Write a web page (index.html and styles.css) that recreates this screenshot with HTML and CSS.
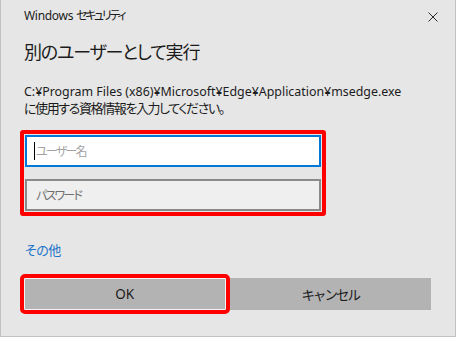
FILE: index.html
```html
<!DOCTYPE html>
<html lang="ja">
<head>
<meta charset="UTF-8" />
<meta name="viewport" content="width=device-width, initial-scale=1" />
<title>Windows セキュリティ</title>
<link rel="stylesheet" href="styles.css">
</head>
<body>

<div class="dialog">
  <div class="titlebar">
    <span class="app-name">Windows <span class="ja">セキュリティ</span></span>
    <svg class="close" width="10" height="10" viewBox="0 0 10 10" aria-label="閉じる">
      <path d="M0.5 0.5 L9.5 9.5 M9.5 0.5 L0.5 9.5" stroke="#2b2b2b" stroke-width="1" fill="none" />
    </svg>
  </div>

  <h1 class="heading">別のユーザーとして実行</h1>

  <p class="message">C:¥Program Files (x86)¥Microsoft¥Edge¥Application¥msedge.exe<br><span class="ja">に使用する資格情報を入力してください。</span></p>

  <!-- red box is the screenshot annotation -->
  <div class="mark">
    <div class="field focused"><span class="caret"></span><span class="hint">ユーザー名</span></div>
    <div class="field"><span class="hint dark">パスワード</span></div>
  </div>

  <a class="more" href="#">その他</a>

  <div class="buttons">
    <button class="btn ok">OK</button>
    <button class="btn">キャンセル</button>
  </div>
</div>

</body>
</html>
```

FILE: styles.css
```css
body {
  margin: 0;
  font-family: "Noto Sans", "Noto Sans CJK JP", sans-serif;
  font-feature-settings: "palt";
  color: #1b1b1b;
}
.dialog {
  width: 456px;
  height: 337px;
  box-sizing: border-box;
  background: #e6e6e6;
  border: 1px solid #c2c2c2;
  border-top: none;
  padding: 0 24px 0 23px;
  display: flex;
  flex-direction: column;
}
.titlebar {
  display: flex;
  justify-content: space-between;
  align-items: flex-start;
  padding-top: 8px;
  height: 24px;
  margin-right: -7px;
}
.app-name {
  font-size: 12px;
  line-height: 16px;
  letter-spacing: -0.3px;
}
.app-name .ja {
  letter-spacing: -2.3px;
}
.close {
  margin-top: 4px;
}
.heading {
  margin: 5px 0 0;
  font-family: "Noto Sans CJK JP", sans-serif;
  font-weight: normal;
  font-size: 18px;
  letter-spacing: -1.2px;
  line-height: 28px;
}
.message {
  margin: 18px 0 0;
  font-size: 12.4px;
  line-height: 17px;
}
.message .ja {
  font-size: 13px;
  letter-spacing: -1.4px;
}
.mark {
  align-self: flex-start;
  margin: 13px 0 0 -4px;
  border: 4px solid #ff0000;
  border-radius: 3px;
  padding: 1px;
  display: flex;
  flex-direction: column;
  gap: 12px;
}
.field {
  width: 296px;
  height: 32px;
  box-sizing: border-box;
  border: 2px solid #8a8a8a;
  background: #efefef;
  display: flex;
  align-items: center;
  padding-left: 8px;
  font-size: 12px;
}
.field.focused {
  border-color: #0078d7;
  background: #fff;
}
.caret {
  width: 1px;
  height: 18px;
  background: #000;
  margin-left: -1px;
}
.hint {
  color: #a2a2a2;
  letter-spacing: -1.8px;
  margin-left: 1px;
}
.hint.dark {
  color: #6f6f6f;
}
.more {
  margin-top: 24px;
  font-size: 13px;
  letter-spacing: -0.5px;
  color: #1a73c8;
  text-decoration: none;
  align-self: flex-start;
  margin-left: 1px;
}
.buttons {
  display: flex;
  gap: 4px;
  margin-top: 19px;
}
.btn {
  flex: 1;
  height: 32px;
  border: 1px solid #b3b3b3;
  background: #b3b3b3;
  font-family: inherit;
  font-size: 13.5px;
  letter-spacing: -2px;
  color: #1b1b1b;
}
.btn.ok {
  border-color: #f4f4f4;
  outline: 4px solid #ff0000;
  border-radius: 1px;
  letter-spacing: 0;
  position: relative;
  z-index: 1;
}
```
